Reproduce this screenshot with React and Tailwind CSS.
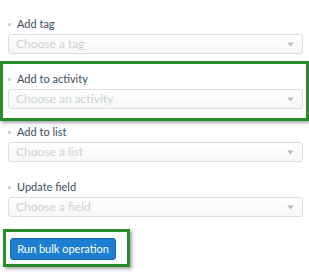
import React from "react";

function Arrow() {
  return (
    <svg width="7" height="5" viewBox="0 0 7 5" className="shrink-0">
      <path d="M0.5 0.5 L6.5 0.5 L3.5 4.5 Z" fill="#b3b8bb" />
    </svg>
  );
}

function Field({ label, placeholder }) {
  return (
    <div className="flex flex-col">
      <div className="flex items-center h-[14px] mb-[3px]">
        <span className="w-[3px] h-[3px] rounded-full bg-[#c4c8cb] ml-[0px] mr-[6px]" />
        <span className="text-[11px] leading-[14px] text-[#3d4d5e]">{label}</span>
      </div>
      <div className="h-[20px] flex items-center justify-between rounded-[3px] border border-[#d9dfe1] bg-gradient-to-b from-white to-[#f6f7f7] pl-[7px] pr-[8px]">
        <span className="text-[12px] leading-[14px] text-[#cdd2d5]">{placeholder}</span>
        <Arrow />
      </div>
    </div>
  );
}

export default function App() {
  return (
    <div
      className="w-[309px] h-[276px] bg-white overflow-hidden"
      style={{ fontFamily: "Lato, 'Open Sans', sans-serif" }}
    >
      <div className="pt-[17px] pl-[8px] pr-[6px]">
        <Field label="Add tag" placeholder="Choose a tag" />
      </div>
      <div className="mt-[7px] border-[3px] border-[#2b8a2b] shadow-[1px_2px_3px_rgba(0,0,0,0.35)] pt-[8px] pb-[9px] pl-[5px] pr-[3px]">
        <Field label="Add to activity" placeholder="Choose an activity" />
      </div>
      <div className="pt-[4px] pl-[8px] pr-[6px] flex flex-col gap-[18px]">
        <Field label="Add to list" placeholder="Choose a list" />
        <Field label="Update field" placeholder="Choose a field" />
      </div>
      <div className="mt-[12px] ml-[3px] w-[127px] h-[38px] border-[3px] border-[#2b8a2b] shadow-[2px_2px_3px_rgba(0,0,0,0.35)] pt-[6px] pl-[4px]">
        <button className="h-[22px] w-[106px] rounded-[3px] bg-[#1c7fd2] border border-[#1769b0] text-white text-[11px] leading-[14px] flex items-center justify-center">
          Run bulk operation
        </button>
      </div>
    </div>
  );
}
